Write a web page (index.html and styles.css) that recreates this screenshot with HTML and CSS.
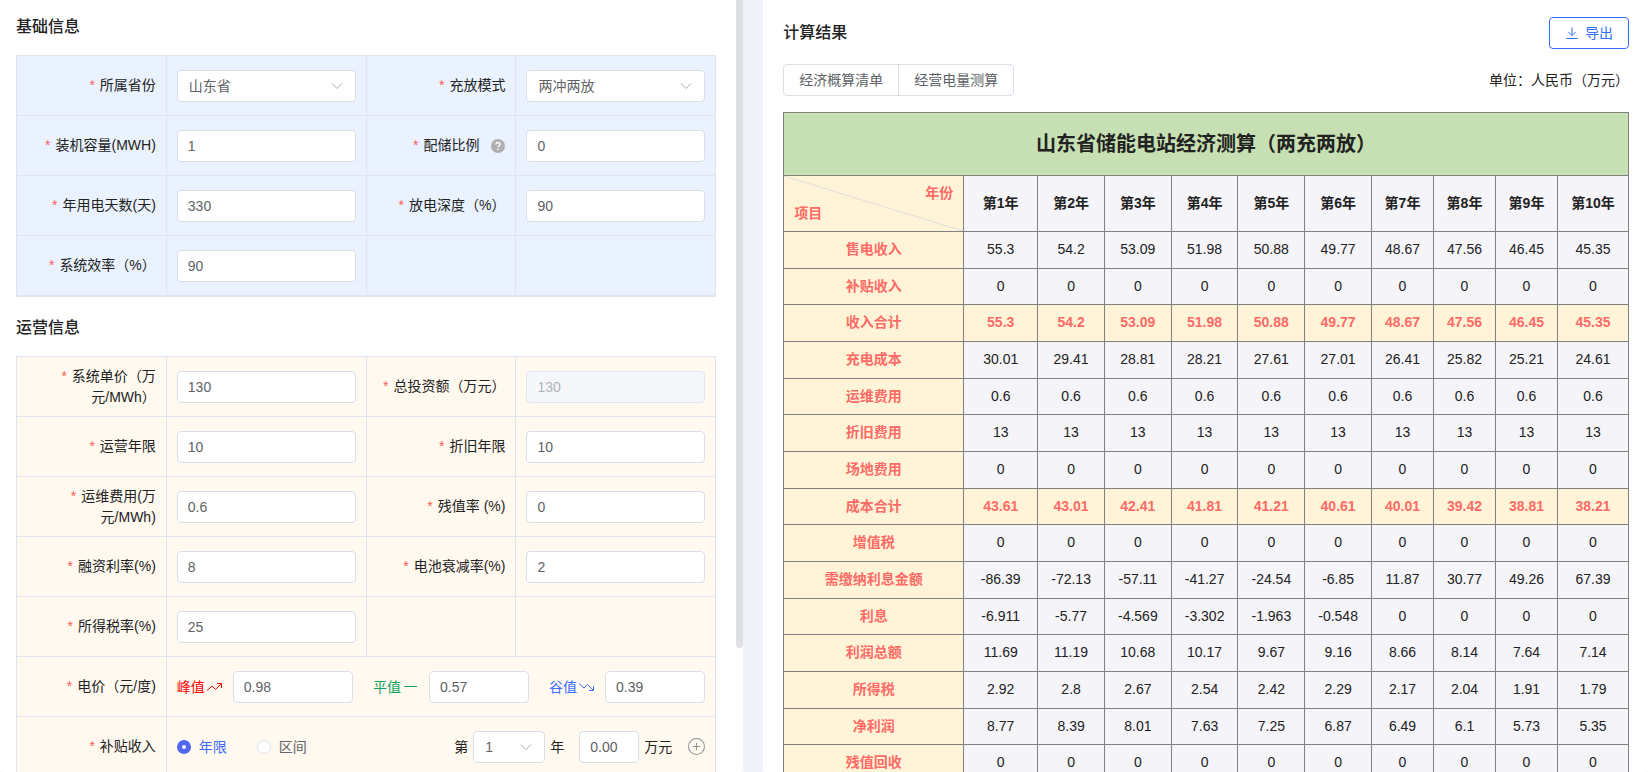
FILE: index.html
```html
<!DOCTYPE html>
<html lang="zh-CN">
<head>
<meta charset="utf-8">
<title>储能电站经济测算</title>
<link rel="stylesheet" href="styles.css">
</head>
<body>
<main class="layout">
  <section class="panel panel-form">
    <form class="form-content">
      <h2 class="section-title">基础信息</h2>
      <div class="form-grid form-grid-basic">
        <label class="cell label" for="province"><span class="required">所属省份</span></label>
        <div class="cell">
          <div class="select"><select id="province"><option>山东省</option></select><svg class="chevron" viewBox="0 0 14 14"><path d="M2 4.500 7 9.500 12 4.500"/></svg></div>
        </div>
        <label class="cell label" for="mode"><span class="required">充放模式</span></label>
        <div class="cell">
          <div class="select"><select id="mode"><option>两冲两放</option></select><svg class="chevron" viewBox="0 0 14 14"><path d="M2 4.500 7 9.500 12 4.500"/></svg></div>
        </div>
        <label class="cell label" for="capacity"><span class="required">装机容量(MWH)</span></label>
        <div class="cell"><input class="field" id="capacity" type="text" value="1"></div>
        <label class="cell label" for="ratio"><span class="required">配储比例</span><svg class="help" viewBox="0 0 14 14"><circle cx="7" cy="7" r="7" fill="#afafaf"/><path d="M5 5.600C5 4.300 5.800 3.500 7 3.500s2 .8 2 1.800c0 1.300-2 1.500-2 3" fill="none" stroke="#fff" stroke-width="1.400"/><circle cx="7" cy="10.300" r=".9" fill="#fff"/></svg></label>
        <div class="cell"><input class="field" id="ratio" type="text" value="0"></div>
        <label class="cell label" for="days"><span class="required">年用电天数(天)</span></label>
        <div class="cell"><input class="field" id="days" type="text" value="330"></div>
        <label class="cell label" for="depth"><span class="required">放电深度（%）</span></label>
        <div class="cell"><input class="field" id="depth" type="text" value="90"></div>
        <label class="cell label" for="efficiency"><span class="required">系统效率（%）</span></label>
        <div class="cell"><input class="field" id="efficiency" type="text" value="90"></div>
        <div class="cell"></div>
        <div class="cell"></div>
      </div>

      <h2 class="section-title">运营信息</h2>
      <div class="form-grid form-grid-operation">
        <label class="cell label" for="unit-price"><span class="required">系统单价（万元/MWh）</span></label>
        <div class="cell"><input class="field" id="unit-price" type="text" value="130"></div>
        <label class="cell label" for="invest"><span class="required">总投资额（万元）</span></label>
        <div class="cell"><input class="field" id="invest" type="text" value="130" disabled></div>
        <label class="cell label" for="years"><span class="required">运营年限</span></label>
        <div class="cell"><input class="field" id="years" type="text" value="10"></div>
        <label class="cell label" for="depreciation"><span class="required">折旧年限</span></label>
        <div class="cell"><input class="field" id="depreciation" type="text" value="10"></div>
        <label class="cell label" for="maintenance"><span class="required">运维费用(万元/MWh)</span></label>
        <div class="cell"><input class="field" id="maintenance" type="text" value="0.6"></div>
        <label class="cell label" for="residual"><span class="required">残值率 (%)</span></label>
        <div class="cell"><input class="field" id="residual" type="text" value="0"></div>
        <label class="cell label" for="interest"><span class="required">融资利率(%)</span></label>
        <div class="cell"><input class="field" id="interest" type="text" value="8"></div>
        <label class="cell label" for="decay"><span class="required">电池衰减率(%)</span></label>
        <div class="cell"><input class="field" id="decay" type="text" value="2"></div>
        <label class="cell label" for="tax"><span class="required">所得税率(%)</span></label>
        <div class="cell"><input class="field" id="tax" type="text" value="25"></div>
        <div class="cell"></div>
        <div class="cell"></div>

        <div class="cell label"><span class="required">电价（元/度)</span></div>
        <div class="cell cell-wide prices">
          <div class="price">
            <label class="price-label peak" for="peak">峰值<svg class="trend" viewBox="0 0 18 16"><path d="M2 11.500 7 7l3.500 3.500L16 5M12 4.500h4.500V9"/></svg></label>
            <input class="field" id="peak" type="text" value="0.98">
          </div>
          <div class="price">
            <label class="price-label flat" for="flat">平值<svg class="trend" viewBox="0 0 18 16"><path d="M3 7.500h13"/></svg></label>
            <input class="field" id="flat" type="text" value="0.57">
          </div>
          <div class="price">
            <label class="price-label valley" for="valley">谷值<svg class="trend" viewBox="0 0 18 16"><path d="M2 4.500 7 9l3.500-3.500L16 11M12 11.500h4.500V7"/></svg></label>
            <input class="field" id="valley" type="text" value="0.39">
          </div>
        </div>

        <div class="cell label"><span class="required">补贴收入</span></div>
        <div class="cell cell-wide subsidy">
          <div class="radios">
            <label class="radio"><input type="radio" name="subsidy" checked><span>年限</span></label>
            <label class="radio"><input type="radio" name="subsidy"><span>区间</span></label>
          </div>
          <div class="subsidy-entry">
            <label for="subsidy-year">第</label>
            <div class="select select-year"><select id="subsidy-year"><option>1</option></select><svg class="chevron" viewBox="0 0 14 14"><path d="M2 4.500 7 9.500 12 4.500"/></svg></div>
            <span class="year-unit">年</span>
            <input class="field field-amount" id="subsidy-amount" type="text" value="0.00" aria-label="补贴金额">
            <span>万元</span>
            <button class="add" type="button" aria-label="添加"><svg viewBox="0 0 16 16"><circle cx="8" cy="8" r="7.500"/><path d="M4.500 8h7M8 4.500v7"/></svg></button>
          </div>
        </div>
      </div>
    </form>
    <div class="scroll-thumb"></div>
  </section>

  <section class="panel panel-result">
    <header class="bar">
      <h2 class="result-title">计算结果</h2>
      <button class="export" type="button"><svg viewBox="0 0 14 14"><path d="M7 1.500v8M3.500 6 7 9.500 10.500 6"/><path d="M1.500 12.500h11"/></svg>导出</button>
    </header>
    <div class="bar">
      <div class="tabs">
        <button class="tab" type="button">经济概算清单</button><button class="tab" type="button">经营电量测算</button>
      </div>
      <span>单位：人民币（万元）</span>
    </div>
    <table class="result">
      <colgroup>
        <col class="col-name"><col class="col-first"><col class="col-mid" span="5"><col class="col-late" span="3"><col class="col-last">
      </colgroup>
      <thead>
        <tr><th class="table-title" colspan="11">山东省储能电站经济测算（两充两放）</th></tr>
        <tr class="years">
          <th class="corner"><svg class="diagonal" viewBox="0 0 100 100" preserveAspectRatio="none"><path d="M0 0 100 100" vector-effect="non-scaling-stroke"/></svg><div class="corner-year">年份</div><div class="corner-item">项目</div></th>
          <th>第1年</th><th>第2年</th><th>第3年</th><th>第4年</th><th>第5年</th><th>第6年</th><th>第7年</th><th>第8年</th><th>第9年</th><th>第10年</th>
        </tr>
      </thead>
      <tbody>
        <tr><th>售电收入</th><td>55.3</td><td>54.2</td><td>53.09</td><td>51.98</td><td>50.88</td><td>49.77</td><td>48.67</td><td>47.56</td><td>46.45</td><td>45.35</td></tr>
        <tr><th>补贴收入</th><td>0</td><td>0</td><td>0</td><td>0</td><td>0</td><td>0</td><td>0</td><td>0</td><td>0</td><td>0</td></tr>
        <tr class="total"><th>收入合计</th><td>55.3</td><td>54.2</td><td>53.09</td><td>51.98</td><td>50.88</td><td>49.77</td><td>48.67</td><td>47.56</td><td>46.45</td><td>45.35</td></tr>
        <tr><th>充电成本</th><td>30.01</td><td>29.41</td><td>28.81</td><td>28.21</td><td>27.61</td><td>27.01</td><td>26.41</td><td>25.82</td><td>25.21</td><td>24.61</td></tr>
        <tr><th>运维费用</th><td>0.6</td><td>0.6</td><td>0.6</td><td>0.6</td><td>0.6</td><td>0.6</td><td>0.6</td><td>0.6</td><td>0.6</td><td>0.6</td></tr>
        <tr><th>折旧费用</th><td>13</td><td>13</td><td>13</td><td>13</td><td>13</td><td>13</td><td>13</td><td>13</td><td>13</td><td>13</td></tr>
        <tr><th>场地费用</th><td>0</td><td>0</td><td>0</td><td>0</td><td>0</td><td>0</td><td>0</td><td>0</td><td>0</td><td>0</td></tr>
        <tr class="total"><th>成本合计</th><td>43.61</td><td>43.01</td><td>42.41</td><td>41.81</td><td>41.21</td><td>40.61</td><td>40.01</td><td>39.42</td><td>38.81</td><td>38.21</td></tr>
        <tr><th>增值税</th><td>0</td><td>0</td><td>0</td><td>0</td><td>0</td><td>0</td><td>0</td><td>0</td><td>0</td><td>0</td></tr>
        <tr><th>需缴纳利息金额</th><td>-86.39</td><td>-72.13</td><td>-57.11</td><td>-41.27</td><td>-24.54</td><td>-6.85</td><td>11.87</td><td>30.77</td><td>49.26</td><td>67.39</td></tr>
        <tr><th>利息</th><td>-6.911</td><td>-5.77</td><td>-4.569</td><td>-3.302</td><td>-1.963</td><td>-0.548</td><td>0</td><td>0</td><td>0</td><td>0</td></tr>
        <tr><th>利润总额</th><td>11.69</td><td>11.19</td><td>10.68</td><td>10.17</td><td>9.67</td><td>9.16</td><td>8.66</td><td>8.14</td><td>7.64</td><td>7.14</td></tr>
        <tr><th>所得税</th><td>2.92</td><td>2.8</td><td>2.67</td><td>2.54</td><td>2.42</td><td>2.29</td><td>2.17</td><td>2.04</td><td>1.91</td><td>1.79</td></tr>
        <tr><th>净利润</th><td>8.77</td><td>8.39</td><td>8.01</td><td>7.63</td><td>7.25</td><td>6.87</td><td>6.49</td><td>6.1</td><td>5.73</td><td>5.35</td></tr>
        <tr><th>残值回收</th><td>0</td><td>0</td><td>0</td><td>0</td><td>0</td><td>0</td><td>0</td><td>0</td><td>0</td><td>0</td></tr>
      </tbody>
    </table>
  </section>
</main>
</body>
</html>
```

FILE: styles.css
```css
* {
  box-sizing: border-box;
}

body {
  margin: 0;
  background: #f1f3f8;
  color: #222;
  font: 14px/20px "Liberation Sans", "Noto Sans CJK SC", sans-serif;
}

input,
select,
button {
  font: inherit;
}

h2 {
  margin: 0;
  font-size: 16px;
  line-height: 24px;
  font-weight: 500;
}

.layout {
  display: grid;
  grid-template-columns: 21fr 25fr;
  gap: 20px;
  height: 100vh;
}

.panel {
  overflow: hidden;
  background: #fff;
  border-radius: 0 0 4px 4px;
}

/* Input form */

.panel-form {
  display: flex;
  gap: 20px;
  padding-left: 16px;
}

.form-content {
  flex: 1;
}

.scroll-thumb {
  width: 7px;
  height: 84%;
  border-radius: 0 0 4px 4px;
  background: #dfe0e2;
}

.section-title {
  margin: 15px 0 16px;
}

.form-grid + .section-title {
  margin-top: 19px;
}

.form-grid {
  display: grid;
  grid-template-columns: 3fr 4fr 3fr 4fr;
  grid-auto-rows: minmax(60px, auto);
  border: 1px solid;
  border-width: 1px 0 0 1px;
  border-color: #dfe4ee;
}

.form-grid-basic {
  border-bottom-width: 1px;
  background: #eaf2ff;
}

.form-grid-operation {
  background: #fff9f0;
}

.cell {
  display: flex;
  align-items: center;
  min-width: 0;
  padding: 0 10px;
  border: 1px solid #dfe4ee;
  border-width: 0 1px 1px 0;
}

.cell-wide {
  grid-column: span 3;
}

.label {
  justify-content: flex-end;
  line-height: 21px;
  text-align: right;
}

.required::before {
  content: "*";
  margin-right: 5px;
  color: #ff5a52;
}

.help {
  width: 14px;
  height: 14px;
  margin-left: 12px;
  flex: none;
}

.field,
.select select {
  width: 100%;
  min-width: 0;
  height: 32px;
  padding: 0 10px;
  border: 1px solid #dadee8;
  border-radius: 4px;
  background: #fff;
  color: #606266;
}

.field:disabled {
  background: #f5f7fb;
  border-color: #e2e6ee;
  color: #b0b2b6;
}

.select {
  position: relative;
  width: 100%;
}

.select select {
  appearance: none;
  padding: 0 11px;
}

.chevron {
  position: absolute;
  top: 9px;
  right: 12px;
  width: 14px;
  height: 14px;
  fill: none;
  stroke: #a8abb2;
  pointer-events: none;
}

.prices {
  display: grid;
  grid-template-columns: 44fr 39fr 39fr;
  gap: 20px;
}

.price {
  display: flex;
  align-items: center;
  gap: 10px;
}

.price-label {
  display: flex;
  align-items: center;
  flex: none;
}

.trend {
  width: 18px;
  height: 16px;
  fill: none;
  stroke: currentColor;
}

.peak {
  color: #f00;
}

.flat {
  color: #12a35c;
}

.valley {
  color: #3b6cff;
}

.subsidy {
  justify-content: space-between;
}

.radios {
  display: flex;
  gap: 30px;
  color: #606266;
}

.radio {
  display: flex;
  align-items: center;
  gap: 8px;
}

.radio input {
  appearance: none;
  width: 14px;
  height: 14px;
  margin: 0;
  border: 1px solid #dadee8;
  border-radius: 50%;
  background: #fff;
}

.radio input:checked {
  border: 5px solid #5167f0;
}

.radio input:checked + span {
  color: #3b6cff;
}

.subsidy-entry {
  display: flex;
  align-items: center;
  gap: 5px;
}

.select-year {
  width: 72px;
}

.year-unit {
  margin-right: 10px;
}

.field-amount {
  width: 60px;
}

.add {
  display: flex;
  margin-left: 11px;
  padding: 0;
  border: 0;
  background: none;
}

.add svg {
  width: 17px;
  height: 17px;
  fill: none;
  stroke: #909399;
}

/* Results */

.panel-result {
  padding: 17px 19px 0 20px;
}

.bar {
  display: flex;
  justify-content: space-between;
  align-items: center;
  margin-bottom: 16px;
}

header.bar {
  margin-bottom: 15px;
}

.export {
  display: flex;
  align-items: center;
  gap: 6px;
  height: 32px;
  padding: 0 15px;
  border: 1px solid #3370ff;
  border-radius: 4px;
  background: #fff;
  color: #3370ff;
}

.export svg {
  width: 14px;
  height: 14px;
  fill: none;
  stroke: currentColor;
}

.tabs {
  display: flex;
}

.tab {
  height: 32px;
  padding: 0 15px;
  border: 1px solid #dadee8;
  border-radius: 4px 0 0 4px;
  background: #fff;
  color: #606266;
}

.tab + .tab {
  margin-left: -1px;
  border-radius: 0 4px 4px 0;
}

.result {
  width: 100%;
  border-collapse: collapse;
  table-layout: fixed;
  text-align: center;
}

.result th,
.result td {
  padding: 0 0 2px;
  border: 1px solid #808080;
  background: #f4f4f9;
}

.col-name {
  width: 180px;
}

.col-first {
  width: 74px;
}

.col-late {
  width: 62px;
}

.col-last {
  width: 71px;
}

.result .table-title {
  height: 63px;
  padding: 0;
  background: #c6e0b3;
  font-size: 20px;
}

.years {
  height: 56px;
}

.result tbody tr {
  height: 37px;
}

.result tbody tr:nth-child(3n + 2) {
  height: 36px;
}

.result .corner,
.result tbody th,
.result .total td {
  background: #fff4d8;
  color: #ff6b66;
  font-weight: bold;
}

.result .corner {
  position: relative;
  padding: 0 10px 2px;
}

.diagonal {
  position: absolute;
  inset: 0;
  width: 100%;
  height: 100%;
  stroke: #dfdfdf;
}

.corner-year {
  text-align: right;
}

.corner-item {
  text-align: left;
}
```
